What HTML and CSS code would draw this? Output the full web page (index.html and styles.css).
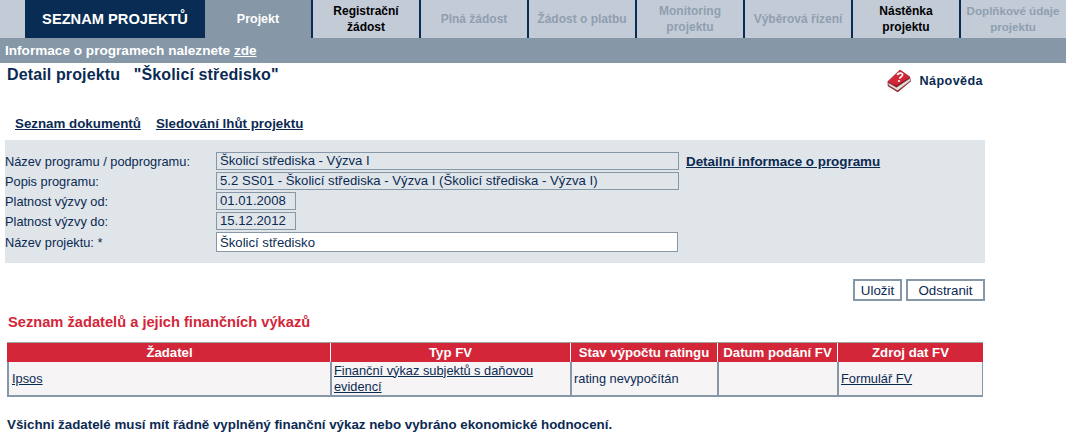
FILE: index.html
```html
<!DOCTYPE html>
<html lang="cs">
<head>
<meta charset="utf-8">
<title>Detail projektu</title>
<link rel="stylesheet" href="styles.css">
</head>
<body>
<nav class="tabs">
  <a class="logo">SEZNAM PROJEKTŮ</a>
  <a class="tab active first">Projekt</a>
  <a class="tab on">Registrační<br>žádost</a>
  <a class="tab off">Plná žádost</a>
  <a class="tab off">Žádost o platbu</a>
  <a class="tab off">Monitoring<br>projektu</a>
  <a class="tab off">Výběrová řízení</a>
  <a class="tab on">Nástěnka<br>projektu</a>
  <a class="tab off last">Doplňkové údaje<br>projektu</a>
</nav>
<div class="infobar">Informace o programech naleznete <a href="#">zde</a></div>
<div class="titlerow">
  <h1>Detail projektu &nbsp; "Školicí středisko"</h1>
  <a class="help">
    <svg class="bookicon" width="25" height="24" viewBox="0 0 25 24">
      <path d="M0.7 12.7 L0.7 17 L10.7 23.3 L24 12.2 L23 8 L9 16Z" fill="#8e1422"/>
      <path d="M1.5 14 L9.5 18.5 L23 9.5 L23.3 11.8 L10.5 21.6 L1.8 16.3Z" fill="#e6e2de" stroke="#9a8f8c" stroke-width=".5"/>
      <path d="M0.7 12.7 L13 1 L23 8 L9.3 16.6 Z" fill="#d32639" stroke="#9c1726" stroke-width=".7"/>
      <path d="M10.4 6.2 C10.8 3.6 15.6 3.4 15.6 5.8 C15.6 7.7 12.8 7.6 12.6 9.6" fill="none" stroke="#fff" stroke-width="1.7"/>
      <circle cx="12" cy="12" r="1.1" fill="#fff"/>
    </svg>
    <span>Nápověda</span>
  </a>
</div>
<div class="doclinks">
  <a href="#">Seznam dokumentů</a>
  <a href="#">Sledování lhůt projektu</a>
</div>
<section class="panel">
  <div class="frow"><label>Název programu / podprogramu:</label><span class="field wide">Školicí střediska - Výzva I</span><a class="detail" href="#">Detailní informace o programu</a></div>
  <div class="frow"><label>Popis programu:</label><span class="field wide">5.2 SS01 - Školicí střediska - Výzva I (Školicí střediska - Výzva I)</span></div>
  <div class="frow"><label>Platnost výzvy od:</label><span class="field date">01.01.2008</span></div>
  <div class="frow"><label>Platnost výzvy do:</label><span class="field date">15.12.2012</span></div>
  <div class="frow"><label>Název projektu: *</label><input class="input" type="text" value="Školicí středisko"></div>
</section>
<div class="actions">
  <button class="btn save">Uložit</button>
  <button class="btn">Odstranit</button>
</div>
<h2>Seznam žadatelů a jejich finančních výkazů</h2>
<table class="grid">
  <colgroup><col class="c1"><col class="c2"><col class="c3"><col class="c4"><col class="c5"></colgroup>
  <thead>
    <tr><th>Žadatel</th><th>Typ FV</th><th>Stav výpočtu ratingu</th><th>Datum podání FV</th><th>Zdroj dat FV</th></tr>
  </thead>
  <tbody>
    <tr>
      <td><a href="#">Ipsos</a></td>
      <td><a href="#">Finanční výkaz subjektů s daňovou evidencí</a></td>
      <td>rating nevypočítán</td>
      <td></td>
      <td><a href="#">Formulář FV</a></td>
    </tr>
  </tbody>
</table>
<p class="note">Všichni žadatelé musí mít řádně vyplněný finanční výkaz nebo vybráno ekonomické hodnocení.</p>
</body>
</html>
```
FILE: styles.css
```css
* { box-sizing: border-box; }
html, body { margin: 0; padding: 0; }
body { width: 1066px; height: 443px; overflow: hidden; background: #fff; font-family: "Liberation Sans", Arial, sans-serif; font-size: 13px; color: #0b2a52; }
a { color: inherit; }

.tabs { display: flex; height: 38px; padding-left: 25px; background: #c3cbd7; }
.logo { width: 180px; background: #082c54; color: #fff; font-weight: bold; font-size: 14.67px; display: flex; align-items: center; justify-content: center; }
.tab { width: 108px; border-left: 2px solid #082c54; display: flex; align-items: center; justify-content: center; text-align: center; font-weight: bold; font-size: 12px; line-height: 16px; }
.tab.first { width: 106px; border-left: 0; background: #8698a7; color: #fff; font-size: 12.5px; }
.tab.on { color: #000; }
.tab.off { color: #8f9fb0; }
.tab.last { width: 106px; font-size: 11.6px; }

.infobar { height: 25px; background: #8698a7; color: #fff; font-weight: bold; font-size: 13.6px; line-height: 26px; padding-left: 5px; }

.titlerow { display: flex; justify-content: space-between; height: 43px; padding: 2px 83px 0 7px; }
h1 { margin: 0; font-size: 16px; line-height: 19px; letter-spacing: .13px; color: #0b2a52; font-weight: bold; }
.help { display: flex; align-items: center; gap: 8px; height: 24px; margin-top: 4px; font-weight: bold; font-size: 12.6px; letter-spacing: .4px; }

.doclinks { display: flex; gap: 15px; height: 34px; padding: 10px 0 0 15px; font-weight: bold; font-size: 13.33px; }

.panel { margin-left: 5px; width: 980px; height: 123px; background: #e0e5ea; padding-top: 12px; }
.frow { display: flex; align-items: center; margin-bottom: 2px; }
.frow label { width: 211px; color: #0b2a52; font-size: 12.8px; }
.field { height: 18px; line-height: 16px; border: 1px solid #8698a7; padding-left: 3px; font-size: 13.15px; }
.wide { width: 463px; }
.date { width: 80px; }
.detail { margin-left: 7px; font-weight: bold; font-size: 13.4px; }
.input { width: 462px; height: 20px; border: 1px solid #8698a7; background: #fff; padding: 0 3px; font: 13.15px "Liberation Sans", Arial, sans-serif; color: #0b2a52; border-radius: 0; outline: 0; }

.actions { display: flex; justify-content: flex-end; gap: 4px; width: 985px; height: 22px; margin-top: 16px; }
.btn { height: 22px; width: 79px; background: #fff; border: 2px solid #8698a7; font: 13.33px "Liberation Sans", Arial, sans-serif; color: #0b2a52; padding: 0; border-radius: 0; }
.save { width: 49px; }

h2 { margin: 13px 0 0 8px; height: 28px; font-size: 14.67px; line-height: 16px; color: #d32639; font-weight: bold; }

.grid { margin: 0 0 0 7px; width: 976px; table-layout: fixed; border-collapse: separate; border-spacing: 0; border-top: 1px solid #9fa5a0; }
.c1 { width: 323px; } .c2 { width: 240px; } .c3 { width: 147px; } .c4 { width: 120px; } .c5 { width: 146px; }
.grid th { background: #d32639; color: #fff; font-weight: bold; font-size: 13.2px; height: 19px; padding: 0; border-left: 1px solid #fff; text-align: center; }
.grid th:first-child { border-left: 2px solid #d32639; }
.grid td { height: 35px; background: #f6f4f5; border-left: 2px solid #8698a7; border-bottom: 2px solid #8698a7; padding: 0 3px 0 2px; line-height: 16px; color: #0b2a52; font-size: 12.8px; }
.grid td:first-child { padding-left: 3px; }
.grid td:last-child { border-right: 1px solid #8698a7; }

.note { margin: 20px 0 0 7px; font-weight: bold; font-size: 13.33px; color: #0b2a52; }
```
